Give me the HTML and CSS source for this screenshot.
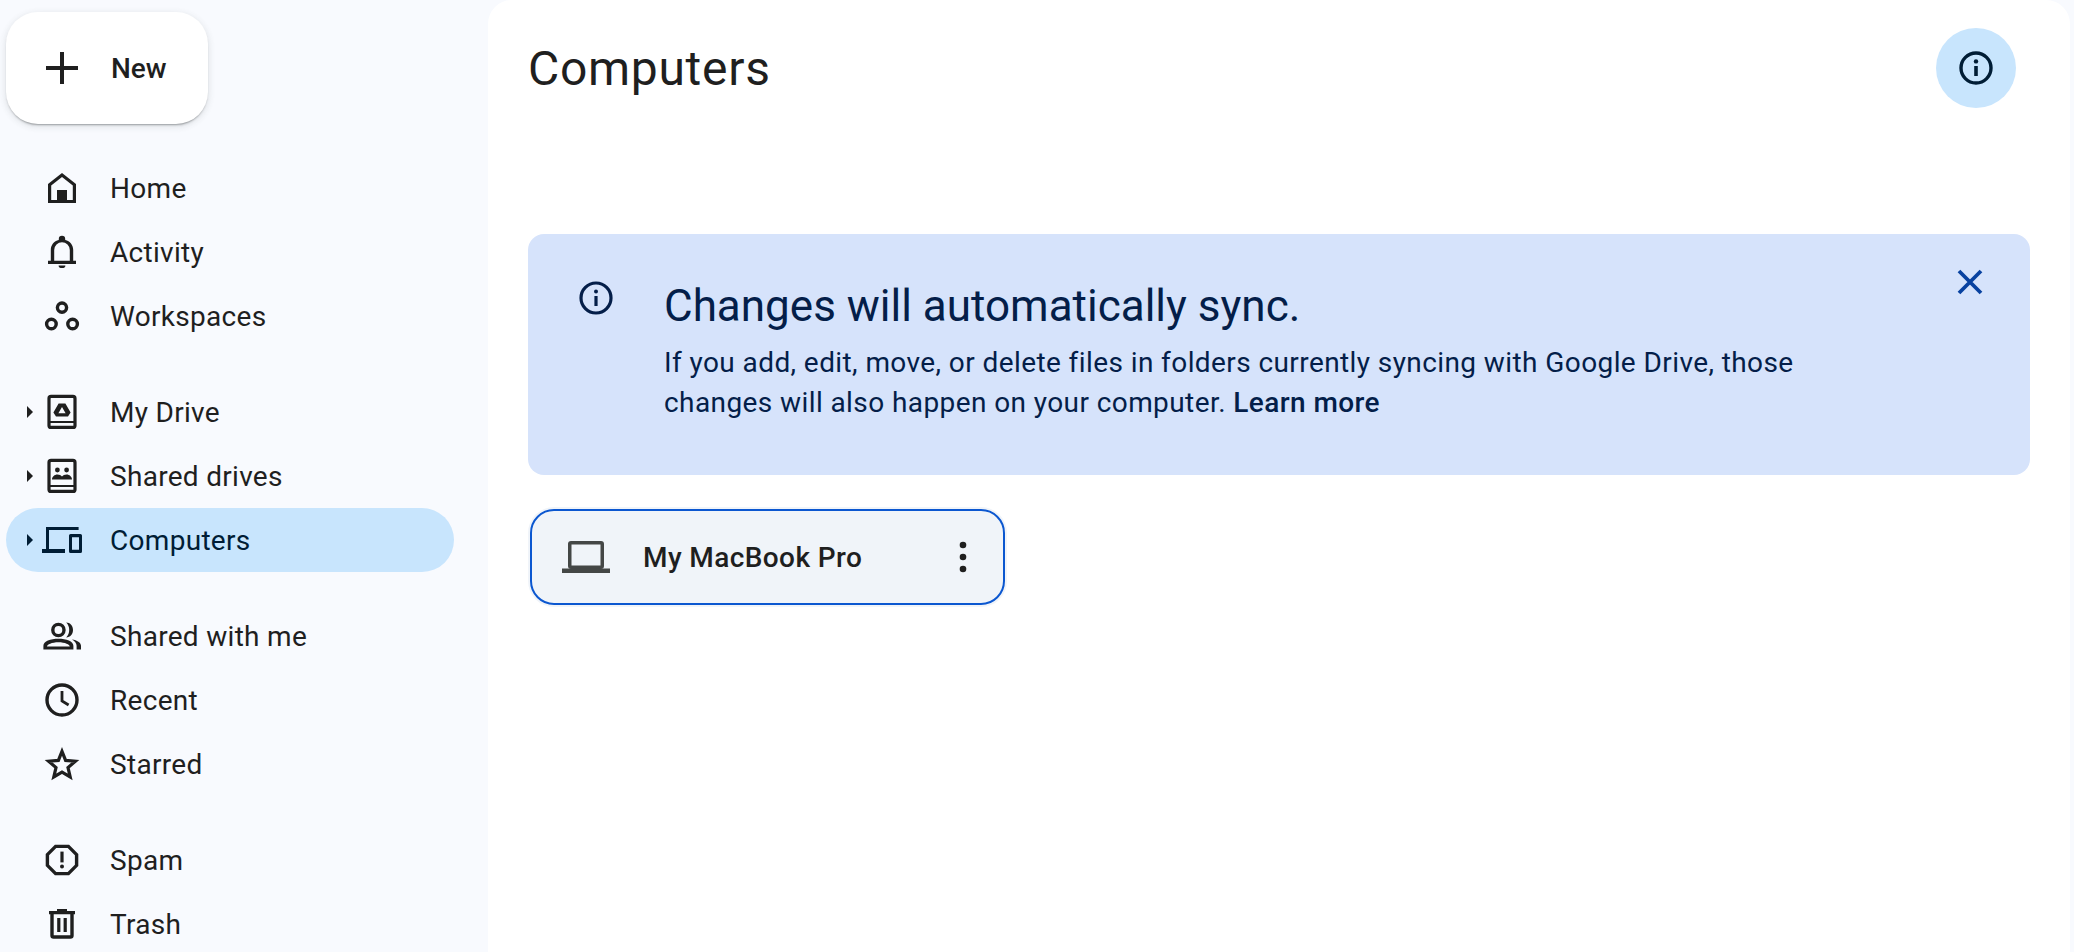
FILE: index.html
```html
<!DOCTYPE html>
<html lang="en">
<head>
    <meta charset="UTF-8">
    <meta name="viewport" content="width=device-width, initial-scale=1.0">
    <title>Computers</title>
    <link rel="stylesheet" href="styles.css">
</head>
<body>
    <div class="app">
        <aside class="sidebar">
            <button class="new-btn">
                <svg class="new-icon" viewBox="0 0 24 24"><path d="M20 13h-7v7h-2v-7H4v-2h7V4h2v7h7z"/></svg>
                <span>New</span>
            </button>

            <nav class="nav-group nav-first">
                <a class="nav-item"><span class="caret-slot"></span>
                    <svg class="icon" viewBox="0 0 20 20"><path fill-rule="evenodd" d="M3 17.500V8l7-5.500L17 8v9.500zM4.600 16h2.900V11h5v5h2.900V8.800L10 4.500 4.600 8.800z"/></svg>
                    <span>Home</span></a>
                <a class="nav-item"><span class="caret-slot"></span>
                    <svg class="icon" viewBox="0 0 20 20"><path fill-rule="evenodd" d="M3 14.400h1.400V9c0-2.500 1.600-4.500 4-5V3.500a1.600 1.600 0 0 1 3.200 0V4c2.400.5 4 2.500 4 5v5.400H17V16H3zM6.100 14.400h7.800V9a3.900 3.900 0 0 0-7.800 0z"/><path d="M8.300 16.700h3.400a1.700 1.300 0 0 1-3.400 0z"/></svg>
                    <span>Activity</span></a>
                <a class="nav-item"><span class="caret-slot"></span>
                    <svg class="icon" viewBox="0 0 20 20"><g fill="none" stroke="currentColor" stroke-width="1.700"><circle cx="10" cy="5.800" r="2.300"/><circle cx="4.700" cy="14" r="2.400"/><circle cx="15.300" cy="14" r="2.400"/></g></svg>
                    <span>Workspaces</span></a>
            </nav>

            <nav class="nav-group">
                <a class="nav-item"><span class="caret-slot"><i class="caret"></i></span>
                    <svg class="icon" viewBox="0 0 20 20"><rect x="3.500" y="2.200" width="13" height="15.500" rx="1" fill="none" stroke="currentColor" stroke-width="1.600"/><path d="M3.500 14.500h13V15.500h-13z"/><path fill-rule="evenodd" d="M8.300 5.800h3.400l2.600 4.500-1.300 1.900H7l-1.300-1.900zM10 7.500l-1.800 3.100h3.600z"/></svg>
                    <span>My Drive</span></a>
                <a class="nav-item"><span class="caret-slot"><i class="caret"></i></span>
                    <svg class="icon" viewBox="0 0 20 20"><rect x="3.500" y="2.200" width="13" height="15.500" rx="1" fill="none" stroke="currentColor" stroke-width="1.600"/><path d="M3.500 14.500h13V15.500h-13z"/><circle cx="7.700" cy="7" r="1.200"/><circle cx="12.300" cy="7" r="1.200"/><path d="M5 11.800c0-1.500 1.300-2.600 2.700-2.600 1 0 1.800.4 2.300 1 .5-.6 1.300-1 2.300-1 1.400 0 2.700 1.100 2.700 2.600z"/></svg>
                    <span>Shared drives</span></a>
                <a class="nav-item is-active"><span class="caret-slot"><i class="caret"></i></span>
                    <svg class="icon" viewBox="0 0 20 20"><path d="M2 3.500h16.300v1.500H3.500V14.500H11.500v2H0v-2h2z"/><path fill-rule="evenodd" d="M14.300 7h4.900a.8.8 0 0 1 .8.800v7.900a.8.8 0 0 1-.8.800h-4.900a.8.8 0 0 1-.8-.8V7.800a.8.8 0 0 1 .8-.8zM15 8.600v6.300h3.500V8.600z"/></svg>
                    <span>Computers</span></a>
            </nav>

            <nav class="nav-group">
                <a class="nav-item"><span class="caret-slot"></span>
                    <svg class="icon" viewBox="0 0 20 20"><circle cx="8.200" cy="7" r="2.800" fill="none" stroke="currentColor" stroke-width="1.700"/><path fill-rule="evenodd" d="M.7 16.800v-1.900c0-2.200 3.600-3.500 7.500-3.500s7.500 1.300 7.500 3.500v1.900zM2.500 15.200h11.400c0-.9-2.400-2.100-5.700-2.100s-5.700 1.200-5.700 2.100z"/><path d="M12.100 3.300c2 0 3.400 1.600 3.400 3.700s-1.400 3.700-3.400 3.700c1-1 1.500-2.300 1.500-3.700s-.5-2.700-1.500-3.700zM15 11.700c2.500.4 4.500 1.500 4.500 3.200v1.900h-2.200v-1.900c0-1.300-1-2.400-2.300-3.200z"/></svg>
                    <span>Shared with me</span></a>
                <a class="nav-item"><span class="caret-slot"></span>
                    <svg class="icon" viewBox="0 0 20 20"><circle cx="10" cy="10" r="7.500" fill="none" stroke="currentColor" stroke-width="1.700"/><path d="M10 5.500v5l3.300 2" fill="none" stroke="currentColor" stroke-width="1.400"/></svg>
                    <span>Recent</span></a>
                <a class="nav-item"><span class="caret-slot"></span>
                    <svg class="icon" viewBox="0 0 20 20"><path d="M10 3.700l1.800 4.500 4.900.4-3.700 3.200 1.100 4.700L10 14.100l-4.100 2.400L7 11.800 3.300 8.600l4.900-.4z" fill="none" stroke="currentColor" stroke-width="1.600"/></svg>
                    <span>Starred</span></a>
            </nav>

            <nav class="nav-group">
                <a class="nav-item"><span class="caret-slot"></span>
                    <svg class="icon" viewBox="0 0 20 20"><path d="M6.800 3.200h6.400l4.100 4.100v5.400l-4.100 4.100H6.800l-4.100-4.100V7.300z" fill="none" stroke="currentColor" stroke-width="1.700"/><path d="M9.200 5.800h1.600v5.400H9.200z"/><circle cx="10" cy="13.300" r="1"/></svg>
                    <span>Spam</span></a>
                <a class="nav-item"><span class="caret-slot"></span>
                    <svg class="icon" viewBox="0 0 20 20"><path d="M3.500 3.500h4V2.500h5v1h4V5.100h-13z"/><path d="M5 5v10.700c0 .5.300.8.800.8h8.400c.5 0 .8-.3.800-.8V5" fill="none" stroke="currentColor" stroke-width="1.700"/><path d="M7.600 7h1.600v7H7.600zM10.800 7h1.600v7h-1.600z"/></svg>
                    <span>Trash</span></a>
            </nav>
        </aside>

        <main class="main">
            <header class="main-header">
                <h1>Computers</h1>
                <button class="info-btn">
                    <svg class="icon" viewBox="0 0 20 20"><circle cx="10" cy="10" r="7.500" fill="none" stroke="currentColor" stroke-width="1.700"/><path d="M9.100 9h1.800v5H9.100z"/><circle cx="10" cy="6.700" r="1.100"/></svg>
                </button>
            </header>

            <section class="banner">
                <svg class="icon banner-icon" viewBox="0 0 20 20"><circle cx="10" cy="10" r="7.500" fill="none" stroke="currentColor" stroke-width="1.600"/><path d="M9.200 9h1.600v5H9.200z"/><circle cx="10" cy="6.700" r="1"/></svg>
                <div class="banner-text">
                    <h2>Changes will automatically sync.</h2>
                    <p>If you add, edit, move, or delete files in folders currently syncing with Google Drive, those<br>changes will also happen on your computer. <strong>Learn more</strong></p>
                </div>
                <button class="close-btn">
                    <svg class="icon" viewBox="0 0 20 20"><path d="M4.500 4.500l11 11M15.500 4.500l-11 11" fill="none" stroke="currentColor" stroke-width="1.900"/></svg>
                </button>
            </section>

            <div class="computer-card">
                <svg class="laptop-icon" viewBox="0 0 48 32"><path fill-rule="evenodd" d="M6 3a3 3 0 0 1 3-3h30a3 3 0 0 1 3 3v22a3 3 0 0 1-3 3H9a3 3 0 0 1-3-3zM9.500 3.500v21h29v-21z"/><path d="M0 27.500h48V32H0z"/></svg>
                <span class="card-name">My MacBook Pro</span>
                <svg class="kebab" viewBox="0 0 8 32"><circle cx="4" cy="4" r="3.300"/><circle cx="4" cy="16" r="3.300"/><circle cx="4" cy="28" r="3.300"/></svg>
            </div>
        </main>
    </div>
</body>
</html>
```

FILE: styles.css
```css
* {
    box-sizing: border-box;
}

html, body {
    height: 100%;
}

body {
    margin: 0;
    overflow: hidden;
    font-family: Roboto, "Liberation Sans", sans-serif;
    color: #1f1f1f;
    background: #f8fafe;
}

button {
    font: inherit;
    border: none;
    cursor: pointer;
}

.app {
    display: flex;
    height: 952px;
    padding-right: 4px;
}

.sidebar {
    width: 488px;
    flex-shrink: 0;
    padding: 12px 0 0 6px;
}

.new-btn {
    display: flex;
    align-items: center;
    gap: 25px;
    width: 202px;
    height: 112px;
    padding: 0 0 0 32px;
    font-size: 28px;
    font-weight: 500;
    color: #1f1f1f;
    background: #fff;
    border-radius: 32px;
    box-shadow: 0 2px 2px -1px rgba(60, 64, 67, .45), 0 2px 6px 1px rgba(60, 64, 67, .12);
}

.new-icon {
    width: 48px;
    height: 48px;
    fill: currentColor;
}

.nav-group {
    margin-top: 32px;
}

.nav-item {
    display: flex;
    align-items: center;
    width: 448px;
    height: 64px;
    font-size: 28px;
    letter-spacing: .3px;
    border-radius: 32px;
}

.nav-item.is-active {
    color: #001d35;
    background: #c8e5fd;
}

.caret-slot {
    width: 36px;
    padding-left: 21px;
    flex-shrink: 0;
}

.caret {
    display: block;
    width: 0;
    height: 0;
    border-top: 6px solid transparent;
    border-bottom: 6px solid transparent;
    border-left: 6px solid currentColor;
}

.icon {
    width: 40px;
    height: 40px;
    flex-shrink: 0;
    fill: currentColor;
}

.nav-item .icon {
    margin-right: 28px;
}

.main {
    flex: 1;
    padding: 0 40px;
    background: #fff;
    border-radius: 24px 24px 0 0;
}

.main-header {
    display: flex;
    align-items: center;
    justify-content: space-between;
    padding: 28px 14px 0 0;
    margin-bottom: 126px;
}

.main-header h1 {
    margin: 0;
    font-size: 48px;
    font-weight: 400;
    letter-spacing: .7px;
}

.info-btn {
    display: flex;
    align-items: center;
    justify-content: center;
    width: 80px;
    height: 80px;
    padding: 0;
    color: #001d35;
    background: #c8e5fd;
    border-radius: 50%;
}

.banner {
    display: flex;
    align-items: flex-start;
    padding: 44px 40px 52px 48px;
    color: #041e49;
    background: #d6e3fb;
    border-radius: 16px;
}

.banner-icon {
    margin-right: 48px;
}

.banner-text {
    flex: 1;
}

.banner-text h2 {
    margin: 0;
    font-size: 44px;
    font-weight: 400;
    line-height: 56px;
}

.banner-text p {
    margin: 9px 0 0;
    font-size: 28px;
    line-height: 40px;
    letter-spacing: .41px;
}

.banner-text strong {
    font-weight: 500;
}

.close-btn {
    width: 40px;
    height: 40px;
    padding: 0;
    margin-top: -16px;
    color: #0842a0;
    background: none;
}

.computer-card {
    display: flex;
    align-items: center;
    width: 475px;
    height: 96px;
    margin: 34px 0 0 2px;
    padding: 0 36px 0 30px;
    background: #f0f4f9;
    border: 2px solid #0b57d0;
    border-radius: 24px;
    box-shadow: 0 0 0 2px #f0f4f9;
}

.laptop-icon {
    width: 48px;
    height: 32px;
    fill: #444746;
    margin-right: 33px;
}

.card-name {
    flex: 1;
    font-size: 28px;
    font-weight: 500;
    letter-spacing: .4px;
}

.kebab {
    width: 8px;
    height: 32px;
    fill: #1f1f1f;
}
```
